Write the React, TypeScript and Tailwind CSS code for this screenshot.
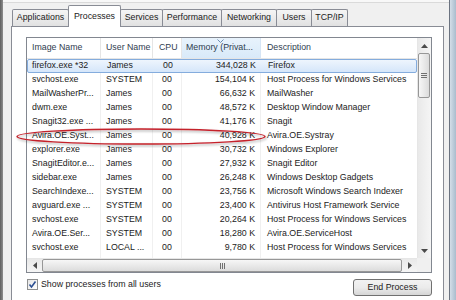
const tabs = [
  { label: "Applications", w: "w-[57px]" },
  { label: "Processes", w: "w-[53px]", active: true },
  { label: "Services", w: "w-[43px]" },
  { label: "Performance", w: "w-[60px]" },
  { label: "Networking", w: "w-[56px]" },
  { label: "Users", w: "w-[36px]" },
  { label: "TCP/IP", w: "w-[37px]" },
];

const rows = [
  ["firefox.exe *32", "James", "00", "344,028 K", "Firefox"],
  ["svchost.exe", "SYSTEM", "00", "154,104 K", "Host Process for Windows Services"],
  ["MailWasherPr...", "James", "00", "66,632 K", "MailWasher"],
  ["dwm.exe", "James", "00", "48,572 K", "Desktop Window Manager"],
  ["Snagit32.exe ...", "James", "00", "41,176 K", "Snagit"],
  ["Avira.OE.Syst...", "James", "00", "40,928 K", "Avira.OE.Systray"],
  ["explorer.exe", "James", "00", "30,732 K", "Windows Explorer"],
  ["SnagitEditor.e...", "James", "00", "27,932 K", "Snagit Editor"],
  ["sidebar.exe", "James", "00", "26,248 K", "Windows Desktop Gadgets"],
  ["SearchIndexe...", "SYSTEM", "00", "23,756 K", "Microsoft Windows Search Indexer"],
  ["avguard.exe ...", "SYSTEM", "00", "23,400 K", "Antivirus Host Framework Service"],
  ["svchost.exe", "SYSTEM", "00", "20,264 K", "Host Process for Windows Services"],
  ["Avira.OE.Ser...", "SYSTEM", "00", "18,280 K", "Avira.OE.ServiceHost"],
  ["svchost.exe", "LOCAL ...", "00", "9,780 K", "Host Process for Windows Services"],
];

function Arrow({ dir }: { dir: "up" | "down" | "left" | "right" }) {
  const pts = {
    up: "0,4 3.5,0 7,4",
    down: "0,0 3.5,4 7,0",
    left: "4,0 0,3.5 4,7",
    right: "0,0 4,3.5 0,7",
  }[dir];
  const vertical = dir === "up" || dir === "down";
  return (
    <svg width={vertical ? 7 : 4} height={vertical ? 4 : 7} viewBox={vertical ? "0 0 7 4" : "0 0 4 7"}>
      <polygon points={pts} fill="#4a4a4a" />
    </svg>
  );
}

export default function App() {
  return (
    <div className="relative flex h-[300px] w-[456px] overflow-hidden bg-[#f0f0f0] font-['Liberation_Sans',Arial,sans-serif] text-[8.8px] text-[#1b1b1b]">
      {/* left window frame */}
      <div className="w-[3px] shrink-0 bg-gradient-to-r from-[#5f5f5f] to-[#8f8f8f]" />

      <div className="flex w-[446px] shrink-0 flex-col">
        <div className="h-[3px] shrink-0 border-b border-[#dadada] bg-[#f8f8f8]" />

        {/* Tabs */}
        <div className="relative z-10 flex h-[23px] shrink-0 items-end pl-[9px]">
          {tabs.map((t, i) =>
            t.active ? (
              <div
                key={t.label}
                className={`relative top-px -ml-px flex h-[22px] ${t.w} items-start justify-center rounded-t-[2px] border border-b-0 border-[#898c95] bg-white pt-[4px]`}
              >
                {t.label}
              </div>
            ) : (
              <div
                key={t.label}
                className={`${i > 0 ? "-ml-px" : ""} flex h-[17px] ${t.w} items-center justify-center rounded-t-[2px] border border-b-0 border-[#898c95] bg-gradient-to-b from-[#f5f5f5] to-[#e1e1e1]`}
              >
                {t.label}
              </div>
            )
          )}
        </div>

        {/* Tab panel */}
        <div className="ml-[8px] mr-[5px] h-[290px] shrink-0 border border-[#898c95] bg-white pl-[14px] pr-[11px] pt-[10px]">
          {/* List view */}
          <div className="flex h-[236px] flex-col border border-[#828790] bg-white">
            <div className="flex h-[220px]">
              <div className="flex w-[390px] flex-col overflow-hidden">
                {/* Header */}
                <div className="flex h-[21px] shrink-0 border-b border-[#e5e5e5] text-[#2f3d4f]">
                  <div className="flex w-[74px] items-center border-r border-[#e5e5e5] pl-[5px]">Image Name</div>
                  <div className="flex w-[52px] items-center border-r border-[#e5e5e5] pl-[5px]">User Name</div>
                  <div className="flex w-[29px] items-center border-r border-[#e5e5e5] pl-[6px]">CPU</div>
                  <div className="relative flex w-[79px] items-center whitespace-nowrap border-r border-[#d6e5f5] bg-gradient-to-b from-[#e8f3fc] to-[#d9eaf9] pl-[4px]">
                    <svg className="absolute left-[35px] top-[1px]" width="7" height="4" viewBox="0 0 7 4">
                      <polyline points="0.5,0.5 3.5,3.5 6.5,0.5" fill="none" stroke="#6d8fb3" strokeWidth="1" />
                    </svg>
                    Memory (Privat...
                  </div>
                  <div className="flex flex-1 items-center pl-[6px]">Description</div>
                </div>

                {/* Rows */}
                {rows.map((r, i) => {
                  const sel = i === 0;
                  const line = sel ? "border-transparent" : "border-[#f0f0f0]";
                  return (
                    <div
                      key={i}
                      className={`flex h-[14px] shrink-0 items-center whitespace-nowrap ${
                        sel ? "rounded-[2px] border border-[#84acdd] bg-gradient-to-b from-[#eef5fd] to-[#d5e6fa]" : ""
                      }`}
                    >
                      <div className={`flex h-full w-[74px] items-center overflow-hidden border-r ${line} ${sel ? "pl-[4px]" : "pl-[5px]"}`}>{r[0]}</div>
                      <div className={`flex h-full w-[52px] items-center overflow-hidden border-r ${line} pl-[5px]`}>{r[1]}</div>
                      <div className={`flex h-full w-[29px] items-center border-r ${line} pl-[9px]`}>{r[2]}</div>
                      <div className={`flex h-full w-[79px] items-center justify-end border-r ${line} pr-[5px]`}>{r[3]}</div>
                      <div className="flex h-full flex-1 items-center overflow-hidden pl-[6px]">{r[4]}</div>
                    </div>
                  );
                })}
                <div className="flex flex-1">
                  <div className="w-[74px] border-r border-[#f0f0f0]" />
                  <div className="w-[52px] border-r border-[#f0f0f0]" />
                  <div className="w-[29px] border-r border-[#f0f0f0]" />
                  <div className="w-[79px] border-r border-[#f0f0f0]" />
                </div>
              </div>

              {/* Vertical scrollbar */}
              <div className="flex w-[14px] flex-col border-l border-[#e6e6e6] bg-gradient-to-r from-[#e9e9e9] to-[#f5f5f5]">
                <div className="flex h-[15px] items-center justify-center">
                  <Arrow dir="up" />
                </div>
                <div className="flex h-[45px] w-[12px] flex-col items-center justify-center gap-[1px] rounded-[2px] border border-[#979797] bg-gradient-to-r from-[#f7f7f7] to-[#dcdcdc]">
                  <div className="h-px w-[6px] bg-[#707070]" />
                  <div className="h-px w-[6px] bg-[#707070]" />
                  <div className="h-px w-[6px] bg-[#707070]" />
                </div>
                <div className="flex-1" />
                <div className="flex h-[15px] items-center justify-center">
                  <Arrow dir="down" />
                </div>
              </div>
            </div>

            {/* Horizontal scrollbar */}
            <div className="flex h-[14px] shrink-0">
              <div className="flex w-[390px] border-t border-[#e6e6e6] bg-gradient-to-b from-[#e9e9e9] to-[#f5f5f5]">
                <div className="flex w-[15px] items-center justify-center">
                  <Arrow dir="left" />
                </div>
                <div className="flex w-[360px] items-center justify-center gap-[1px] rounded-[2px] border border-[#979797] bg-gradient-to-b from-[#f7f7f7] to-[#dcdcdc]">
                  <div className="h-[6px] w-px bg-[#707070]" />
                  <div className="h-[6px] w-px bg-[#707070]" />
                  <div className="h-[6px] w-px bg-[#707070]" />
                </div>
                <div className="flex w-[15px] items-center justify-center">
                  <Arrow dir="right" />
                </div>
              </div>
              <div className="w-[14px] bg-[#f0f0f0]" />
            </div>
          </div>

          {/* Bottom controls */}
          <div className="mt-[5px] flex items-start justify-between">
            <div className="flex items-center gap-[3px] pl-px">
              <div className="flex h-[11px] w-[11px] items-center justify-center border border-[#8e8f8f] bg-gradient-to-br from-[#e6e6e6] to-[#ffffff]">
                <svg width="9" height="9" viewBox="0 0 9 9">
                  <polyline points="1.5,4.5 3.5,7 7.5,1.5" fill="none" stroke="#2c4f92" strokeWidth="1.6" />
                </svg>
              </div>
              <span>Show processes from all users</span>
            </div>
            <button className="mt-px flex h-[17px] w-[79px] items-center justify-center rounded-[3px] border border-[#707070] bg-gradient-to-b from-[#f2f2f2] via-[#ebebeb] to-[#d6d6d6]">
              End Process
            </button>
          </div>
        </div>
      </div>

      {/* right window frame */}
      <div className="w-[7px] shrink-0 border-l border-[#6b7380] bg-gradient-to-r from-[#d4dee8] to-[#a9bccd]" />

      {/* red annotation ellipse */}
      <svg className="absolute left-[14px] top-[126px]" width="258" height="22" viewBox="0 0 258 22">
        <defs>
          <filter id="sh" x="-5%" y="-50%" width="110%" height="200%">
            <feDropShadow dx="1" dy="1.5" stdDeviation="0.8" floodColor="#000" floodOpacity="0.35" />
          </filter>
        </defs>
        <ellipse cx="127" cy="10.5" rx="124" ry="7.6" fill="none" stroke="#c4202a" strokeWidth="1.5" filter="url(#sh)" />
      </svg>
    </div>
  );
}
